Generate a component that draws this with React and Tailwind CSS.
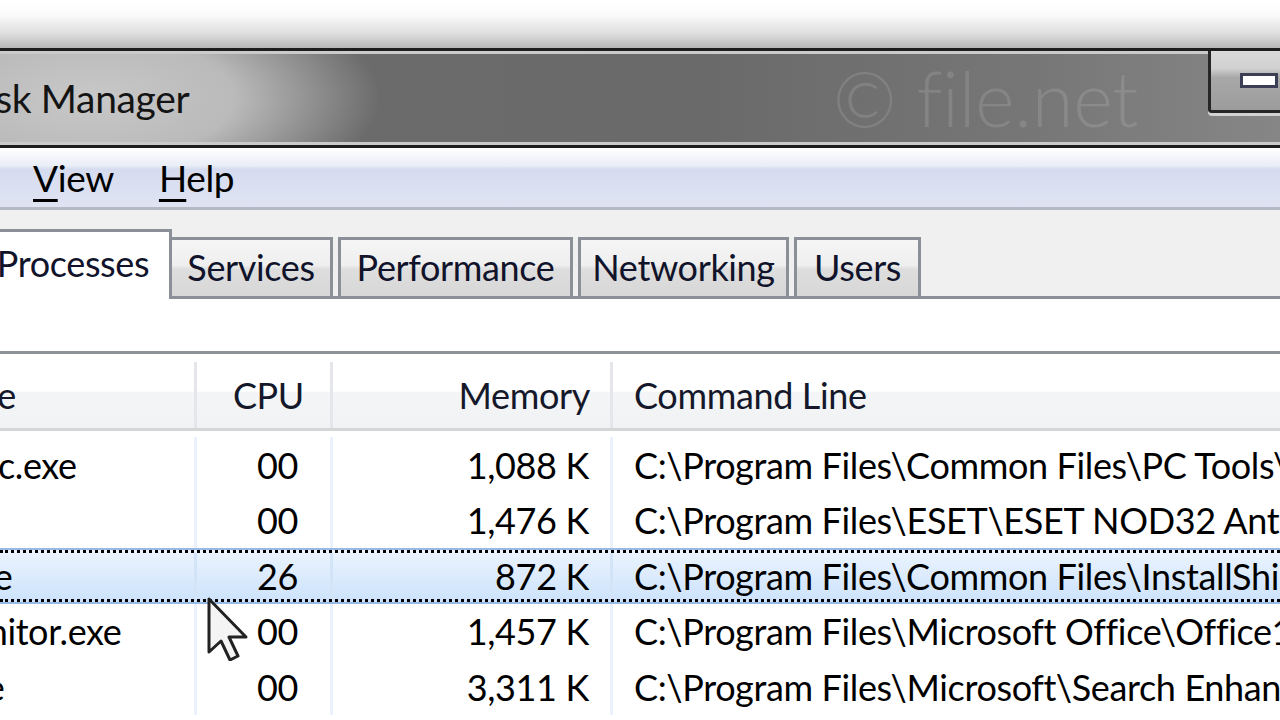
import clsx from "clsx";

const processes = [
    {name: "PCTSAuxSrc.exe", cpu: "00", mem: "1,088 K", cmd: "C:\\Program Files\\Common Files\\PC Tools\\sMonitor\\StartManSvc.exe"},
    {name: "ekrn.exe", cpu: "00", mem: "1,476 K", cmd: "C:\\Program Files\\ESET\\ESET NOD32 Antivirus\\ekrn.exe"},
    {name: "ISUSPM.exe", cpu: "26", mem: "872 K", cmd: "C:\\Program Files\\Common Files\\InstallShield\\UpdateService\\ISUSPM.exe", selected: true},
    {name: "GrooveMonitor.exe", cpu: "00", mem: "1,457 K", cmd: "C:\\Program Files\\Microsoft Office\\Office12\\GrooveMonitor.exe"},
    {name: "SeaPort.exe", cpu: "00", mem: "3,311 K", cmd: "C:\\Program Files\\Microsoft\\Search Enhancement Pack\\SeaPort\\SeaPort.exe"},
]

function Row({p}) {
    const line = p.selected ? "border-[#d3e4f9]" : "border-[#eaf1fb]"
    return (
        <div className={clsx("h-[55.5px] flex",
            p.selected && "border-y-[2px] border-[#98b9e4] bg-[linear-gradient(to_bottom,#ecf4fe_0%,#dcebfd_50%,#cce2fb_100%)]")}>
            <div className={clsx("flex flex-1 min-w-0", p.selected && "border-y-[3px] border-dotted border-black")}>
                <div className={clsx("-ml-[184px] w-[381px] shrink-0 pl-[6px] flex items-center border-r-[3px] whitespace-nowrap", line)}>
                    {p.name}
                </div>
                <div className={clsx("w-[136px] shrink-0 flex items-center justify-end pr-[32px] border-r-[3px]", line)}>
                    {p.cpu}
                </div>
                <div className={clsx("w-[280px] shrink-0 flex items-center justify-end pr-[21px] border-r-[3px]", line)}>
                    {p.mem}
                </div>
                <div className="flex-1 min-w-0 flex items-center pl-[21px] whitespace-nowrap overflow-hidden">
                    {p.cmd}
                </div>
            </div>
        </div>
    )
}

function Tab({label, className}) {
    return (
        <div className={clsx("h-[59px] shrink-0 border-[3px] border-b-0 border-[#8b8f97] flex items-center justify-center pb-[2px]",
            "bg-[linear-gradient(to_bottom,#f5f5f5_0%,#efefef_45%,#dedede_52%,#d7d7d7_100%)]", className)}>
            {label}
        </div>
    )
}

export default function App() {
    return (
        <div className="relative w-[1280px] h-[720px] overflow-hidden bg-white flex flex-col font-['Lato',sans-serif] text-[36px] tracking-[-0.01em] leading-none text-black">
            {/* desktop strip above the window */}
            <div className="h-[48px] shrink-0 bg-[linear-gradient(to_bottom,#ffffff_0%,#fbfbfb_30%,#dedede_70%,#b8b8b8_100%)]"/>

            {/* title bar */}
            <div className="h-[100px] shrink-0 border-y-[3px] border-[#1e1e1e]">
                <div className="h-full border-y-[3px] border-[#cacaca] flex items-center
                    bg-[radial-gradient(ellipse_290px_120px_at_90px_50%,#c8c8c8_0%,#bababa_50%,rgba(108,108,108,0)_100%),linear-gradient(to_right,#6c6c6c_0%,#6a6a6a_55%,#767676_80%,#868686_100%)]">
                    <span className="-ml-[42px] text-[39px] text-[#141414] whitespace-nowrap">Task Manager</span>
                    <span className="ml-auto mr-[70px] text-[76px] font-light text-white/12 whitespace-nowrap">© file.net</span>
                    <div className="self-start -mt-[3px] w-[72px] h-[62px] shrink-0 border-l-[3px] border-b-[3px] border-[#262626] rounded-bl-[4px]
                        shadow-[0_3px_0_#d2d2d2] flex items-center pl-[29px]
                        bg-[linear-gradient(to_bottom,#dadada_0%,#d0d0d0_30%,#a8a8a8_45%,#9c9c9c_100%)]">
                        <div className="w-[38px] h-[15px] shrink-0 bg-white border-[3px] border-[#3b3e55]"/>
                    </div>
                </div>
            </div>

            {/* menu bar */}
            <div className="h-[62px] shrink-0 border-b-[3px] border-[#b4b9c5] flex items-center text-[37px]
                bg-[linear-gradient(to_bottom,#ffffff_0%,#e9edf7_30%,#d6dcef_36%,#dfe4f3_100%)]">
                <div className="-ml-[250px] w-[283px] shrink-0 flex gap-[45px]">
                    <span><span className="underline decoration-[3px] underline-offset-[7px]">F</span>ile</span>
                    <span><span className="underline decoration-[3px] underline-offset-[7px]">O</span>ptions</span>
                </div>
                <div className="flex gap-[45px]">
                    <span><span className="underline decoration-[3px] underline-offset-[7px]">V</span>iew</span>
                    <span><span className="underline decoration-[3px] underline-offset-[7px]">H</span>elp</span>
                </div>
            </div>

            {/* tabs */}
            <div className="h-[86px] shrink-0 bg-[#f0f0f0] flex items-end text-[#10132a]">
                <div className="relative z-10 -ml-[26px] -mb-[3px] w-[198px] h-[70px] shrink-0 bg-white border-[3px] border-b-0 border-[#8b8f97]
                    flex items-center justify-center pb-[6px]">
                    Processes
                </div>
                <Tab label="Services" className="w-[161px] border-l-0"/>
                <Tab label="Performance" className="w-[235px] ml-[5px]"/>
                <Tab label="Networking" className="w-[211px] ml-[5px]"/>
                <Tab label="Users" className="w-[127px] ml-[5px]"/>
            </div>

            {/* panel */}
            <div className="flex-1 bg-white border-t-[3px] border-[#8b8f97] pt-[52px] flex flex-col">
                <div className="border-t-[3px] border-[#8e9299] flex flex-col">
                    <div className="h-[77px] shrink-0 flex border-b-[3px] border-[#d5d5d5] pt-[8px] text-[#15182a]
                        bg-[linear-gradient(to_bottom,#ffffff_0%,#ffffff_50%,#f4f5f7_52%,#f1f2f4_100%)]">
                        <div className="-ml-[184px] w-[381px] shrink-0 pl-[6px] flex items-center border-r-[3px] border-[#e4e6e9] whitespace-nowrap">
                            Image Name
                        </div>
                        <div className="w-[136px] shrink-0 flex items-center justify-end pr-[26px] border-r-[3px] border-[#e4e6e9]">
                            CPU
                        </div>
                        <div className="w-[280px] shrink-0 flex items-center justify-end pr-[20px] border-r-[3px] border-[#e4e6e9]">
                            Memory
                        </div>
                        <div className="flex-1 flex items-center pl-[21px]">Command Line</div>
                    </div>
                    <div className="pt-[6px] flex flex-col">
                        {processes.map((p, i) => <Row key={i} p={p}/>)}
                    </div>
                </div>
            </div>

            {/* mouse pointer */}
            <svg className="absolute left-[207px] top-[597px]" width="42" height="64" viewBox="-2 -2 42 64">
                <polygon points="0,0 0,53 12,42 21,61 29,57 20,38 37,38" fill="#f4f4f4" stroke="#222" strokeWidth="3" strokeLinejoin="round"/>
            </svg>
        </div>
    )
}
